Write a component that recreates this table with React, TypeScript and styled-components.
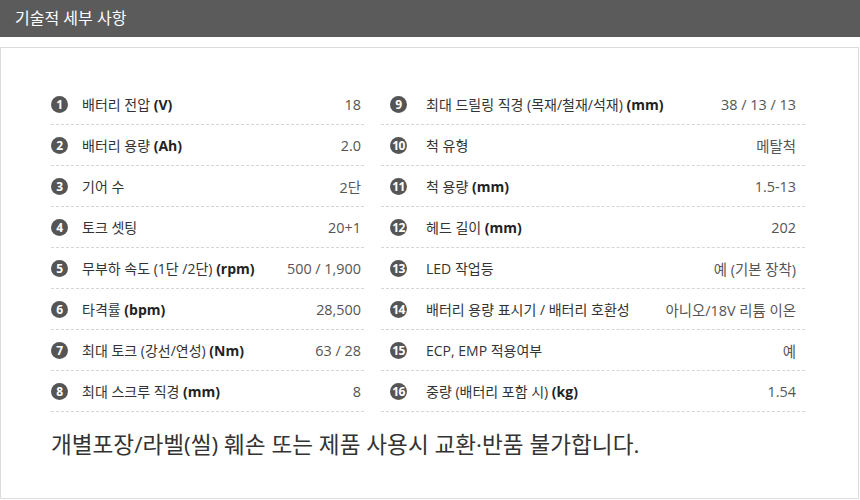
import React, { FC } from "react";
import styled, { createGlobalStyle } from "styled-components";

const GlobalStyle = createGlobalStyle`
  html, body {
    margin: 0;
    padding: 0;
    background: #fff;
    font-family: "Open Sans", "Noto Sans CJK KR", sans-serif;
  }
`;

type Spec = { label: string; unit?: string; value: string };

const leftSpecs: Spec[] = [
    { label: "배터리 전압", unit: "(V)", value: "18" },
    { label: "배터리 용량", unit: "(Ah)", value: "2.0" },
    { label: "기어 수", value: "2단" },
    { label: "토크 셋팅", value: "20+1" },
    { label: "무부하 속도 (1단 /2단)", unit: "(rpm)", value: "500 / 1,900" },
    { label: "타격률", unit: "(bpm)", value: "28,500" },
    { label: "최대 토크 (강선/연성)", unit: "(Nm)", value: "63 / 28" },
    { label: "최대 스크루 직경", unit: "(mm)", value: "8" },
];

const rightSpecs: Spec[] = [
    { label: "최대 드릴링 직경 (목재/철재/석재)", unit: "(mm)", value: "38 / 13 / 13" },
    { label: "척 유형", value: "메탈척" },
    { label: "척 용량", unit: "(mm)", value: "1.5-13" },
    { label: "헤드 길이", unit: "(mm)", value: "202" },
    { label: "LED 작업등", value: "예 (기본 장착)" },
    { label: "배터리 용량 표시기 / 배터리 호환성", value: "아니오/18V 리튬 이온" },
    { label: "ECP, EMP 적용여부", value: "예" },
    { label: "중량 (배터리 포함 시)", unit: "(kg)", value: "1.54" },
];

const SpecColumn: FC<{ specs: Spec[]; start: number; inset: number; labelGap: number }> = ({
    specs,
    start,
    inset,
    labelGap,
}) => (
    <Column>
        {specs.map((s, i) => (
            <Row key={i} $inset={inset}>
                <Badge>{start + i}</Badge>
                <Label $gap={labelGap}>
                    {s.label}
                    {s.unit && <Unit> {s.unit}</Unit>}
                </Label>
                <Value>{s.value}</Value>
            </Row>
        ))}
    </Column>
);

export default function App() {
    return (
        <>
            <GlobalStyle />
            <Header>기술적 세부 사항</Header>
            <Box>
                <Grid>
                    <SpecColumn specs={leftSpecs} start={1} inset={0} labelGap={14} />
                    <SpecColumn specs={rightSpecs} start={9} inset={9} labelGap={19} />
                </Grid>
                <Notice>개별포장/라벨(씰) 훼손 또는 제품 사용시 교환·반품 불가합니다.</Notice>
            </Box>
        </>
    );
}

const Header = styled.div`
  height: 37px;
  background: #5b5b5b;
  color: #fff;
  font-size: 16px;
  line-height: 37px;
  padding-left: 15px;
`;

const Box = styled.div`
  margin-top: 10px;
  width: 859px;
  height: 452px;
  box-sizing: border-box;
  border: 1px solid #dcdcdc;
  padding: 36px 0 0 50px;
`;

const Grid = styled.div`
  display: grid;
  grid-template-columns: 313px 424px;
  column-gap: 17px;
`;

const Column = styled.div`
  display: flex;
  flex-direction: column;
`;

const Row = styled.div<{ $inset: number }>`
  display: flex;
  align-items: center;
  height: 40px;
  border-bottom: 1px dashed #d6d6d6;
  padding-left: ${(p) => p.$inset}px;
  padding-right: ${(p) => (p.$inset ? 9 : 3)}px;
`;

const Badge = styled.span`
  flex: none;
  width: 17px;
  height: 17px;
  border-radius: 50%;
  background: #555;
  color: #fff;
  font-size: 12px;
  font-weight: 700;
  line-height: 17px;
  text-align: center;
  letter-spacing: -0.6px;
`;

const Label = styled.span<{ $gap: number }>`
  margin-left: ${(p) => p.$gap}px;
  font-size: 14px;
  color: #333;
  white-space: nowrap;
`;

const Unit = styled.b`
  color: #222;
  font-weight: 700;
`;

const Value = styled.span`
  margin-left: auto;
  font-size: 14.4px;
  color: #555;
  white-space: nowrap;
`;

const Notice = styled.div`
  margin-top: 18px;
  font-size: 22.6px;
  line-height: 30px;
  color: #333;
  white-space: nowrap;
`;
